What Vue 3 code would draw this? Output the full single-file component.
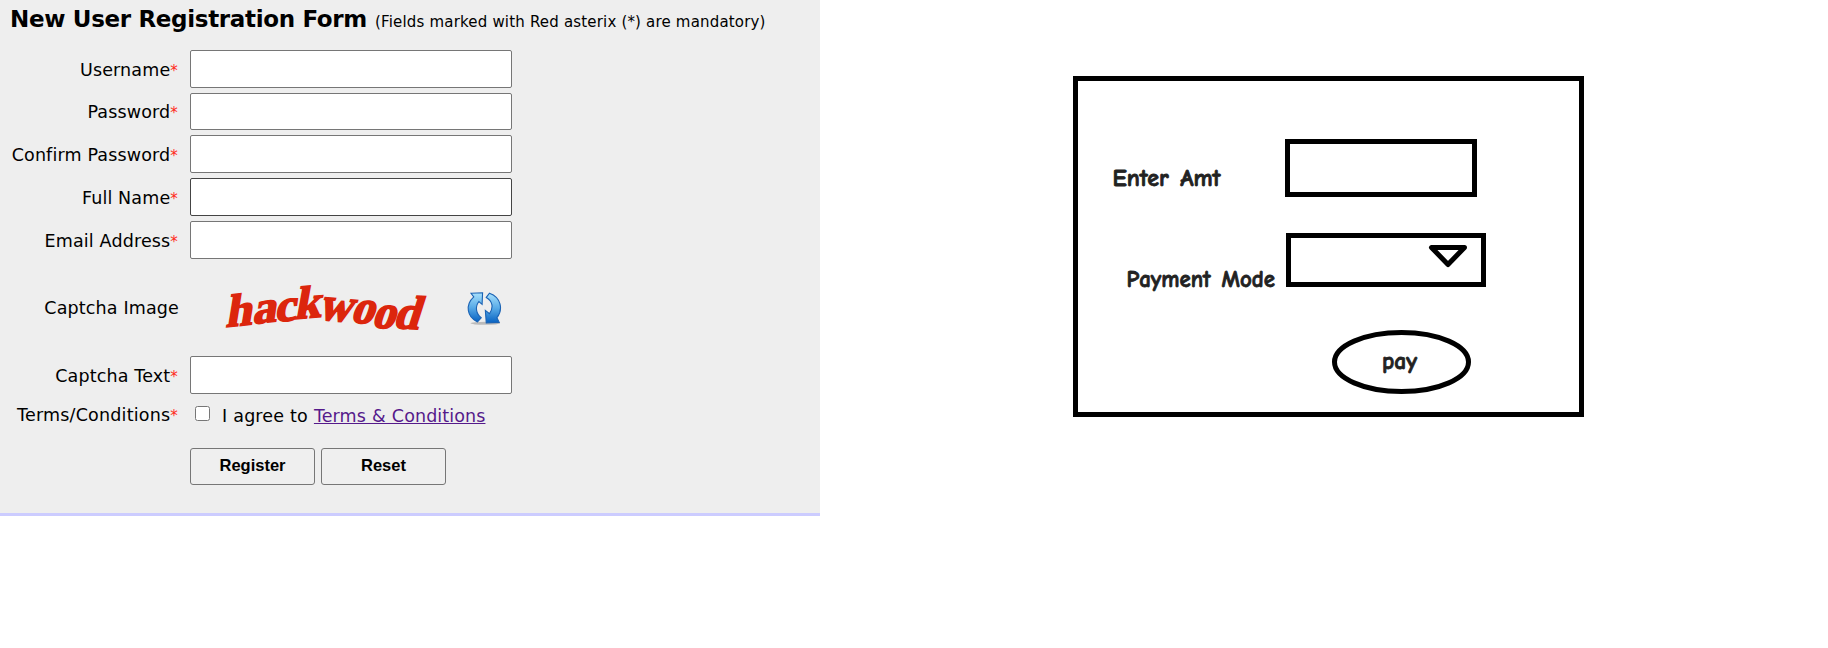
<script setup>
const rows = [
  { label: 'Username', type: 'text' },
  { label: 'Password', type: 'password', short: true },
  { label: 'Confirm Password', type: 'password' },
  { label: 'Full Name', type: 'text', active: true },
  { label: 'Email Address', type: 'text' },
]
</script>

<template>
  <main class="page">
    <form class="panel" @submit.prevent>
      <header class="heading">
        <h1>New User Registration Form</h1>
        <span class="note">(Fields marked with Red asterix (*) are mandatory)</span>
      </header>
      <div v-for="row in rows" :key="row.label" class="row">
        <label class="label" :class="{ short: row.short }"><span>{{ row.label }}</span><i>*</i></label>
        <input :type="row.type" class="field" :class="{ short: row.short, active: row.active }" />
      </div>
      <div class="row captcha">
        <label class="label plain">Captcha Image</label>
        <div class="challenge">
          <svg class="word" width="235" height="70" viewBox="0 0 705 210">
            <text transform="skewX(-15)" x="92 171 236 292 362 461 529 594" y="171 162 157 147 147 155 171 173" rotate="-6 -7 -7 -5 5 6 4 3">hackwood</text>
          </svg>
          <svg class="refresh" width="37" height="37" viewBox="0 0 40 40">
            <defs>
              <linearGradient id="blue" x1="0" y1="0" x2="0" y2="1">
                <stop offset="0" stop-color="#a9e1fc" />
                <stop offset=".5" stop-color="#59abe7" />
                <stop offset="1" stop-color="#0862c2" />
              </linearGradient>
            </defs>
            <ellipse cx="22" cy="36" rx="16" ry="1.7" fill="#999" opacity=".6" />
            <path d="M6.5 3.5 L19 3 L18.5 15.5 L15 12.5 C10.5 18 12 26 17.5 30 L13.5 34.5 C2 29 0 16 9.5 7.5 Z" fill="url(#blue)" stroke="#1b63b4" stroke-width="1.2" />
            <path d="M26.5 3.5 C39 8 41.5 21 34.5 30 L37 35 L23 35.5 L22 22 L26.5 25.5 C31 19 30 12 23 8 Z" fill="url(#blue)" stroke="#1b63b4" stroke-width="1.2" />
          </svg>
        </div>
      </div>
      <div class="row">
        <label class="label"><span>Captcha Text</span><i>*</i></label>
        <input type="text" class="field" />
      </div>
      <div class="row terms">
        <label class="label"><span>Terms/Conditions</span><i>*</i></label>
        <div class="consent">
          <input type="checkbox" class="check" />
          <span class="agree">I agree to <a href="#">Terms &amp; Conditions</a></span>
        </div>
      </div>
      <div class="actions">
        <button type="submit" class="btn">Register</button>
        <button type="reset" class="btn">Reset</button>
      </div>
    </form>

    <svg class="sketch" width="511" height="341" viewBox="0 0 511 341">
      <g class="ink">
        <rect x="2.5" y="2.5" width="506" height="336" />
        <rect x="214.5" y="65.5" width="187" height="53" />
        <rect x="215.5" y="159.5" width="195" height="49" />
        <path d="M358.5 171.5 H391.5 L375 188.5 Z" stroke-linejoin="round" />
        <ellipse cx="328.5" cy="286" rx="67" ry="29.5" />
      </g>
      <g class="hand">
        <text x="39.5" y="110" textLength="108" lengthAdjust="spacingAndGlyphs">Enter Amt</text>
        <text x="53.5" y="211" textLength="148.5" lengthAdjust="spacingAndGlyphs">Payment Mode</text>
        <text x="309" y="293" textLength="35" lengthAdjust="spacingAndGlyphs">pay</text>
      </g>
    </svg>
  </main>
</template>

<style>
body {
  background: #fff;
}
</style>

<style scoped>
.page {
  display: grid;
  grid-template-columns: 820px 511px;
  column-gap: 253px;
  align-items: start;
  font-family: Verdana, "DejaVu Sans", sans-serif;
  color: #000;
}
.panel {
  height: 513px;
  background: #eee;
  border-bottom: 3px solid #ccf;
}
.heading {
  display: flex;
  align-items: baseline;
  gap: 8px;
  height: 50px;
  padding-left: 10px;
  box-sizing: border-box;
  white-space: nowrap;
}
h1 {
  margin: 0;
  font-size: 23px;
  line-height: 38px;
  letter-spacing: -0.33px;
}
.note {
  font-size: 15px;
  letter-spacing: 0.18px;
}
.row {
  display: grid;
  grid-template-columns: 178px 322px;
  column-gap: 12px;
  height: 43px;
}
.row:has(.short) {
  height: 42px;
}
.label {
  height: 38px;
  line-height: 40px;
  font-size: 17.5px;
  letter-spacing: 0.15px;
  text-align: right;
  white-space: nowrap;
}
.label.short {
  line-height: 38px;
}
.label i {
  font-style: normal;
  font-size: 15px;
  color: #ff2a1a;
}
.label.plain {
  margin: -7px -1px 0 0;
}
.field {
  width: 322px;
  height: 38px;
  margin: 0;
  box-sizing: border-box;
  border: 1px solid #767676;
  border-radius: 2px;
  background: #fff;
}
.field.short {
  height: 37px;
}
.field.active {
  border-color: #444;
}
.captcha {
  height: 92px;
  align-items: center;
}
.challenge {
  display: flex;
  align-items: center;
  margin-top: -4px;
}
.word {
  margin: -6px 20px 0;
  flex: none;
}
.refresh {
  flex: none;
}
.word text {
  font: bold 140px "Liberation Serif", serif;
  fill: #dc260d;
  stroke: #dc260d;
  stroke-width: 5px;
}
.terms {
  height: 49px;
}
.terms .label {
  height: 30px;
  line-height: 32px;
  letter-spacing: 0.2px;
}
.consent {
  display: flex;
  height: 30px;
}
.check {
  width: 15px;
  height: 15px;
  margin: 7px 12px 0 5px;
}
.agree {
  font-size: 17.5px;
  letter-spacing: 0.1px;
  word-spacing: 0.4px;
  line-height: 34px;
  white-space: nowrap;
}
.agree a {
  color: #551a8b;
}
.actions {
  display: flex;
  gap: 6px;
  padding-left: 190px;
}
.btn {
  width: 125px;
  height: 37px;
  padding: 0 0 3px;
  border: 1px solid #767676;
  border-radius: 3px;
  background: #efefef;
  color: #000;
  font: bold 16.5px "Liberation Sans", Arial, sans-serif;
}
.sketch {
  margin-top: 76px;
}
.ink {
  fill: none;
  stroke: #000;
  stroke-width: 5px;
}
.hand {
  font: bold 24px "Comic Sans MS", "Comic Neue", "Noto Sans", sans-serif;
  fill: #222;
  stroke: #222;
  stroke-width: 0.8px;
  word-spacing: 3px;
}
</style>
